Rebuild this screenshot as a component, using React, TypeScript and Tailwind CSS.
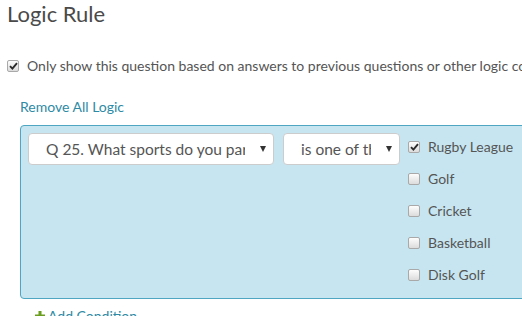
import React from 'react';

const sports = ['Rugby League', 'Golf', 'Cricket', 'Basketball', 'Disk Golf'];

const Check: React.FC<{ checked?: boolean }> = ({ checked }) => (
    <span className="flex h-[12px] w-[12px] shrink-0 items-center justify-center rounded-[2px] border border-[#a9a9a9] bg-gradient-to-b from-[#fdfdfd] to-[#dcdcdc]">
        {checked && (
            <svg width="9" height="8" viewBox="0 0 9 8">
                <path d="M1 4.2 L3.4 6.6 L8 1.2" fill="none" stroke="#2b2b2b" strokeWidth="1.9" />
            </svg>
        )}
    </span>
);

const Select: React.FC<{ value: string; width: string }> = ({ value, width }) => (
    <div className={`relative h-[32px] shrink-0 rounded-[4px] border border-[#cccccc] bg-white ${width}`}>
        <div className="absolute inset-y-0 left-[17px] right-[28px] overflow-hidden whitespace-nowrap text-[15.5px] leading-[30px] text-[#555555]">
            {value}
        </div>
        <span className="absolute right-[7px] top-[12px] h-0 w-0 border-x-[3px] border-t-[6px] border-x-transparent border-t-[#333333]" />
    </div>
);

export default function App() {
    return (
        <div className="h-[316px] w-[522px] overflow-hidden bg-white font-['Lato',sans-serif] text-[#555555]">
            <div className="pl-[7px] text-[22px] leading-[28px] text-[#4a4a4a]">Logic Rule</div>

            {/* show-if option */}
            <div className="mt-[28px] flex items-center gap-[8px] whitespace-nowrap pl-[7px] text-[14px] leading-[20px]">
                <Check checked />
                <span>Only show this question based on answers to previous questions or other logic conditions</span>
            </div>

            <div className="mt-[21px] pl-[20px] text-[14px] leading-[20px] text-[#2e8aa5]">Remove All Logic</div>

            {/* condition panel */}
            <div className="ml-[20px] mt-[8px] w-[560px] rounded-[4px] border border-[#4fa6c3] bg-[#c7e5f0] pb-[5px] pl-[7px] pt-[7px]">
                <div className="flex items-start">
                    <Select value="Q 25. What sports do you participate in?" width="w-[246px]" />
                    <div className="ml-[9px]">
                        <Select value="is one of these" width="w-[117px]" />
                    </div>
                    <div className="ml-[8px] flex flex-col">
                        {sports.map((s, i) => (
                            <div key={s} className="flex h-[32px] items-start">
                                <div className="flex h-[28px] items-center gap-[8px] text-[14px] leading-[28px] text-[#555555]">
                                    <Check checked={i === 0} />
                                    <span>{s}</span>
                                </div>
                            </div>
                        ))}
                    </div>
                </div>
            </div>

            <div className="mt-[7px] flex items-center gap-[3px] pl-[35px] text-[14px] leading-[20px] text-[#2e8aa5]">
                <svg width="10" height="10" viewBox="0 0 10 10">
                    <path d="M5 0 V10 M0 5 H10" stroke="#6b9e1f" strokeWidth="3" />
                </svg>
                <span>Add Condition</span>
            </div>
        </div>
    );
}
